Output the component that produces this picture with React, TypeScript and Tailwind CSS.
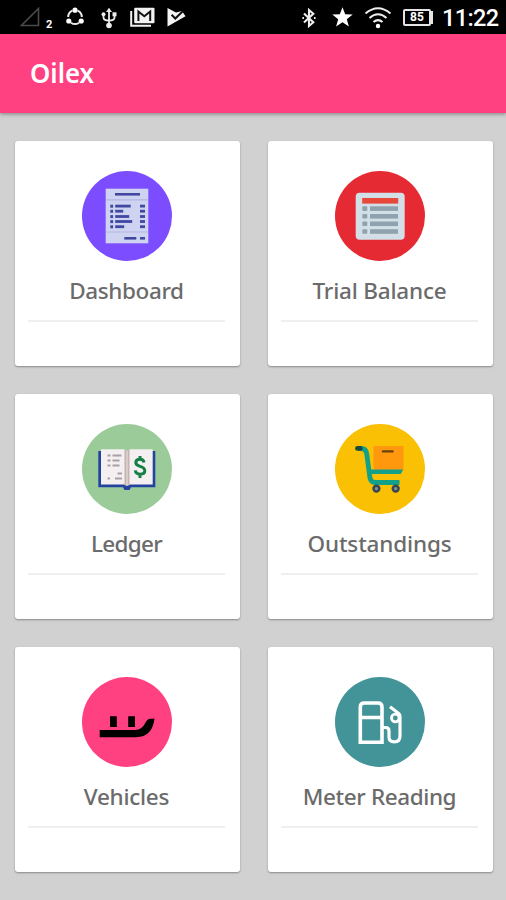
import type { ReactNode } from "react";

function StatusBar() {
  return (
    <div className="flex h-[34px] items-center bg-black pl-5 pr-2 text-white">
      <svg viewBox="0 0 20 20" className="h-5 w-5 shrink-0" fill="none" stroke="#4a4a4a" strokeWidth="1.6">
        <path d="M1.5 18.5H18.5V1.5Z" />
      </svg>
      <span className="ml-[6px] mt-[15px] w-[6px] font-['Roboto',sans-serif] text-[11px] font-bold leading-none">2</span>
      {/* Sync ring */}
      <svg viewBox="0 0 20 20" className="ml-[13px] h-5 w-5 shrink-0" fill="none" stroke="#e8e8e8" strokeWidth="2">
        <path d="M12.7 3.6A7 7 0 0 1 16.8 10M14 15.7A7 7 0 0 1 6 15.7M3.2 10A7 7 0 0 1 7.3 3.6" />
        <g fill="#fff" stroke="none">
          <circle cx="10" cy="3.2" r="2.6" />
          <circle cx="3.8" cy="14" r="2.6" />
          <circle cx="16.2" cy="14" r="2.6" />
        </g>
      </svg>
      {/* USB */}
      <svg viewBox="0 0 16 22" className="ml-[16px] mt-px h-[22px] w-4 shrink-0" fill="none" stroke="#ececec" strokeWidth="1.8">
        <path d="M8 4V18M2.5 7V10.5Q2.5 13.5 8 13.5Q13.5 13.5 13.5 10.5V7" />
        <path d="M8 .8L11 5H5Z" fill="#ececec" stroke="none" />
        <circle cx="2.5" cy="7.2" r="2" fill="#ececec" stroke="none" />
        <path d="M11.5 5.3H15.5V9.3H11.5Z" fill="#ececec" stroke="none" />
        <circle cx="8" cy="18.5" r="2.8" fill="#ececec" stroke="none" />
      </svg>
      {/* Mail stack */}
      <svg viewBox="0 0 25 21" className="ml-[13px] h-[21px] w-[25px] shrink-0" fill="none">
        <path d="M1.2 4V18.8H21" stroke="#f2f2f2" strokeWidth="2" />
        <rect x="4.2" y=".7" width="20.3" height="15.6" rx="1" fill="#f2f2f2" />
        <path d="M8.4 14V4.5L14.3 9.2L20.2 4.5V14" stroke="#111" strokeWidth="2" />
      </svg>
      {/* Play check */}
      <svg viewBox="0 0 19 20" className="ml-[12px] h-5 w-[19px] shrink-0">
        <path d="M.5 1L9 5.5L15 4L18.5 9.3L.5 19.5Z" fill="#f4f4f4" />
        <path d="M4.6 7.8L8.3 11.5L16 4" fill="none" stroke="#111" strokeWidth="2" />
      </svg>

      <svg viewBox="0 0 14 20" className="ml-auto mt-px h-5 w-[14px] shrink-0" fill="none" stroke="#eee" strokeWidth="2.1">
        <path d="M2 5.5L11.3 14.3L7 18V2L11.3 5.7L2 14.5" />
        <path d="M.4 10H2M12 10H13.6" />
      </svg>
      <svg viewBox="0 0 21 20" className="ml-[16px] mr-px h-5 w-[21px] shrink-0">
        <path d="M10.5.2L13.2 7.3L20.7 7.6L14.8 12.2L16.9 19.4L10.5 15.2L4.1 19.4L6.2 12.2L.3 7.6L7.8 7.3Z" fill="#fff" />
      </svg>
      <svg viewBox="0 0 28 23" className="ml-[10px] mr-px h-[23px] w-7 shrink-0" fill="none" stroke="#eee" strokeWidth="2">
        <path d="M1.5 7.5Q14-3 26.5 7.5M5.5 12Q14 4.5 22.5 12M9.5 16Q14 12.2 18.5 16" />
        <circle cx="14" cy="20" r="2.2" fill="#fff" stroke="none" />
      </svg>
      <div className="ml-[10px] flex h-[17px] w-7 shrink-0 items-center justify-center rounded-[2px] border-2 border-neutral-200 font-['Roboto',sans-serif] text-[12px] font-bold leading-none">
        85
      </div>
      <div className="h-[13px] w-[2px] shrink-0 bg-neutral-200" />
      <span className="ml-[9px] mt-[3px] w-[56px] whitespace-nowrap font-['Roboto',sans-serif] text-[23.5px] font-medium leading-none tracking-[-0.6px]">
        11:22
      </span>
    </div>
  );
}

const invoiceRows = [
  { y: 34.2, w: 15.5 },
  { y: 39.3, w: 8 },
  { y: 44.6, w: 14 },
  { y: 49.6, w: 17 },
  { y: 54.8, w: 9 },
];

function InvoiceIcon() {
  return (
    <>
      <rect x="23.7" y="17.7" width="42.6" height="54.6" fill="#cfd3f2" />
      <path d="M24 28.8H66M24 61H66" stroke="#b3b7e2" strokeWidth="1.2" />
      <g fill="#4148a0">
        <rect x="33" y="22" width="25" height="2.6" />
        {invoiceRows.map((row) => (
          <g key={row.y}>
            <rect x="28.3" y={row.y - 0.5} width="2.8" height="3" />
            <rect x="33.2" y={row.y - 0.5} width={row.w} height="2.8" />
            <rect x="58" y={row.y - 0.5} width="5" height="2.8" />
          </g>
        ))}
        <rect x="42.3" y="66" width="12" height="2.6" />
        <rect x="58" y="66" width="5" height="2.6" />
      </g>
    </>
  );
}

function ListIcon() {
  return (
    <>
      <rect x="20.7" y="21.8" width="49" height="47" rx="4" fill="#d3dfe6" />
      <rect x="27.2" y="27" width="36" height="5.6" fill="#e8483a" />
      <g fill="#8ea3ad">
        {[35.3, 43, 50.5, 58.2].map((y) => (
          <g key={y}>
            <rect x="27.3" y={y} width="5" height="4.6" rx="1" />
            <rect x="35" y={y} width="28" height="4.6" />
          </g>
        ))}
      </g>
    </>
  );
}

function BookIcon() {
  return (
    <>
      <path d="M16.3 27H73.3V63.2H49L47.5 66H42.5L41 63.2H16.3Z" fill="#2443a0" />
      <path d="M19 25.3H42L45 27L48 25.3H70.7V60.5H48L45 62L42 60.5H19Z" fill="#f4eff0" />
      <path d="M42.5 25.5L45 27L47.5 25.5V60.8L45 62L42.5 60.8Z" fill="#c4b3b1" />
      <path d="M45 27V61" stroke="#eee5e2" strokeWidth="1" />
      <path
        d="M25.5 31.5H28.5M30.5 31.5H39.5M25.5 36.5H28.5M30.5 36.5H37.5M25.5 41.5H28.5M30.5 41.5H37.5M35.5 49.5H40M25.5 54.5H28M33 54.5H40"
        stroke="#aaa0a4"
        strokeWidth="2"
      />
      <path
        d="M62 38.5Q61.5 35.3 58 35.3Q53.8 35.3 53.8 38.6Q53.8 41.2 58 42.4Q62.8 43.8 62.8 46.8Q62.8 50.2 58.2 50.2Q53.7 50.2 53.3 46.4M58 32V35.3M58 50V54"
        fill="none"
        stroke="#168044"
        strokeWidth="3"
      />
    </>
  );
}

function CartIcon() {
  return (
    <>
      <path d="M38.5 22H68.5V46H38.5Z" fill="#ff980c" />
      <path d="M48 27.4H57.5" stroke="#69420d" strokeWidth="2.4" strokeLinecap="round" />
      <path
        d="M23.5 24.5H26.5Q30.5 24.5 31.6 29L35 54Q36 58.5 40 58.5H64.5"
        fill="none"
        stroke="#12a088"
        strokeWidth="4.8"
      />
      <path d="M34 45.5H68.2L65.8 50H34Z" fill="#12a088" />
      <path d="M22.5 24.4H25.3" stroke="#174b40" strokeWidth="4.8" strokeLinecap="round" />
      <g fill="#8195a0" stroke="#384852" strokeWidth="2.5">
        <circle cx="41.4" cy="64.6" r="2.9" />
        <circle cx="60.7" cy="64.6" r="2.9" />
      </g>
    </>
  );
}

function BoatIcon() {
  return (
    <>
      <path d="M28 39.3H34.8V50H28ZM46.2 39.3H53V50H46.2Z" />
      <path d="M17.7 53H53Q60 52.6 63 46.5Q65 41.8 68.5 41.8H72.5Q71.2 51 67 55.3Q62.5 60.2 54 60.2H17.7Z" />
    </>
  );
}

function PumpIcon() {
  return (
    <g fill="none" stroke="#fff" strokeWidth="3.6">
      <path d="M25.3 65.3V30Q25.3 26 29.3 26H43Q47 26 47 30V65.3ZM25.3 40.5H47" />
      <path d="M48 50.5H50.5Q54 50.5 54 54V60Q54 64.8 59.3 64.8Q65 64.8 65 59V39.5Q65 37.8 63.8 36.6L55 29.8" strokeWidth="3.2" />
      <circle cx="60.3" cy="41" r="3.8" strokeWidth="2.8" />
    </g>
  );
}

type Tile = { label: string; color: string; textClass: string; icon: ReactNode };

const tiles: Tile[] = [
  { label: "Dashboard", color: "fill-[#7c4dff]", textClass: "tracking-[-0.4px]", icon: <InvoiceIcon /> },
  { label: "Trial Balance", color: "fill-[#e52a34]", textClass: "tracking-[-0.2px]", icon: <ListIcon /> },
  { label: "Ledger", color: "fill-[#9acb99]", textClass: "tracking-[-0.7px]", icon: <BookIcon /> },
  { label: "Outstandings", color: "fill-[#fac003]", textClass: "tracking-[-0.15px]", icon: <CartIcon /> },
  { label: "Vehicles", color: "fill-[#ff4081]", textClass: "tracking-[-0.25px]", icon: <BoatIcon /> },
  { label: "Meter Reading", color: "fill-[#429498]", textClass: "tracking-[-0.4px]", icon: <PumpIcon /> },
];

function Card({ tile }: { tile: Tile }) {
  return (
    <button className="flex h-[225px] flex-col items-center rounded-[3px] bg-white pl-[13px] pr-[15px] pt-[30px] shadow-[0_1px_2px_rgba(0,0,0,0.35)]">
      <svg viewBox="0 0 90 90" className="h-[90px] w-[90px] shrink-0">
        <circle cx="45" cy="45" r="45" className={tile.color} />
        {tile.icon}
      </svg>
      <span
        className={`mt-[15px] whitespace-nowrap font-['Noto_Sans',sans-serif] text-[22.5px] font-medium leading-[30px] text-[#6b6b6b] ${tile.textClass}`}
      >
        {tile.label}
      </span>
      <span className="mt-[14px] h-[2px] w-full bg-[#efefef]" />
    </button>
  );
}

export default function App() {
  return (
    <div className="h-[900px] w-[506px] overflow-hidden bg-[#d1d1d1]">
      <StatusBar />
      <header className="relative flex h-[79px] items-center bg-[#ff4081] pb-[2px] pl-[30px] shadow-[0_1px_4px_rgba(0,0,0,0.4)]">
        <h1 className="origin-left scale-x-[0.94] font-['Noto_Sans',sans-serif] text-[27.5px] font-semibold leading-none text-white">
          Oilex
        </h1>
      </header>
      <main className="grid grid-cols-[225px_225px] gap-7 pl-[15px] pt-7">
        {tiles.map((tile) => (
          <Card key={tile.label} tile={tile} />
        ))}
      </main>
    </div>
  );
}
